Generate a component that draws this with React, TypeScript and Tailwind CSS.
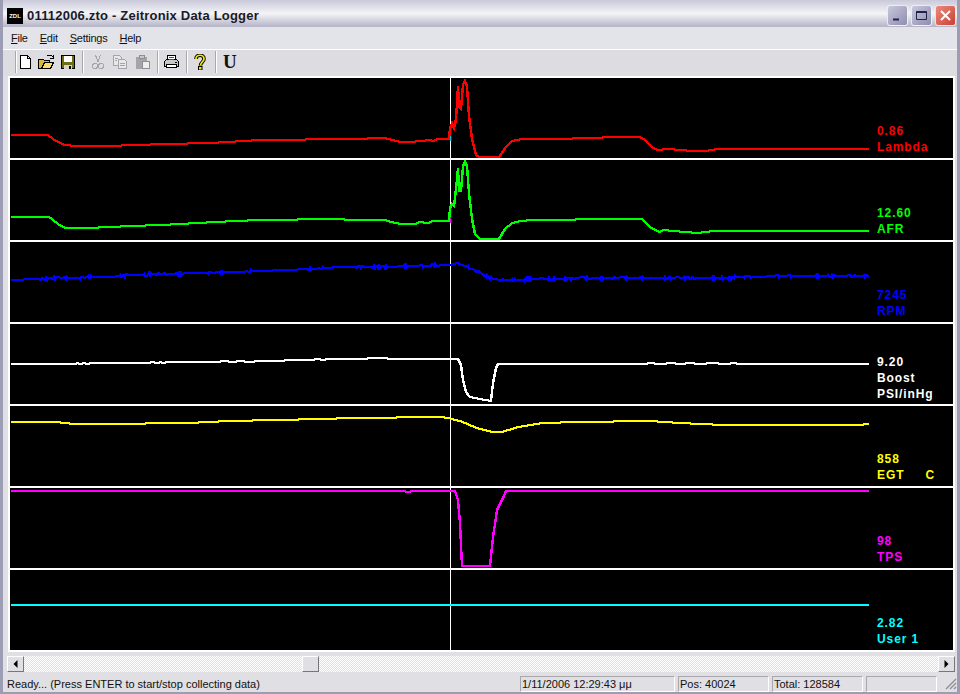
import type { ReactNode } from "react";

const UI_FONT = "font-['Liberation_Sans',Arial,sans-serif]";

type Pt = [number, number];

interface Channel {
  color: string;
  top: number;
  pts: Pt[];
  jitter?: number;
  labels: string[];
  pad: string;
  mark?: { color: string; y1: number; y2: number };
}

// small stable noise, so the trace looks sampled and not drawn
function noise(x: number) {
  const s = Math.sin(x * 12.9898) * 43758.5453;
  return s - Math.floor(s);
}

function trace(pts: Pt[], jitter = 0) {
  const out: string[] = [];
  for (let i = 0; i < pts.length - 1; i++) {
    const [x0, y0] = pts[i];
    const [x1, y1] = pts[i + 1];
    for (let x = Math.ceil(x0); x < x1; x++) {
      const y = y0 + ((y1 - y0) * (x - x0)) / (x1 - x0);
      const j = jitter && noise(Math.floor(x / 4)) > 1 - jitter ? (noise(x) > 0.5 ? 1 : -1) : 0;
      out.push(`${x},${Math.round(y) + j}`);
    }
  }
  const [lx, ly] = pts[pts.length - 1];
  out.push(`${lx},${Math.round(ly)}`);
  return out.join(" ");
}

const CHANNELS: Channel[] = [
  {
    color: "#ff0000",
    top: 78,
    labels: ["0.86", "Lambda"],
    pad: "pb-[3px]",
    mark: { color: "#00c8d8", y1: 126, y2: 141 },
    pts: [
      [11, 135], [48, 135], [52, 138], [56, 141], [65, 145], [77, 146], [107, 146], [135, 145], [165, 144],
      [210, 143], [260, 140], [350, 139], [385, 138], [393, 140], [400, 142], [410, 142], [430, 140],
      [434, 141], [437, 139], [449, 139], [450, 128], [452, 123], [454, 128], [456, 119], [458, 86],
      [459, 106], [461, 109], [463, 84], [465, 81], [467, 86], [469, 116], [472, 139], [476, 155],
      [480, 157], [499, 157], [505, 148], [512, 141], [522, 139], [557, 139], [617, 137], [640, 137],
      [645, 140], [652, 147], [658, 150], [667, 149], [683, 150], [690, 151], [705, 151], [717, 149], [869, 149],
    ],
  },
  {
    color: "#00ff00",
    top: 160,
    labels: ["12.60", "AFR"],
    pad: "pb-[3px]",
    mark: { color: "#ff00ff", y1: 208, y2: 223 },
    pts: [
      [11, 217], [49, 217], [52, 219], [58, 224], [65, 228], [87, 228], [110, 227], [130, 226], [160, 225],
      [180, 224], [215, 222], [258, 220], [290, 220], [305, 219], [385, 220], [395, 223], [402, 224],
      [415, 224], [420, 222], [428, 223], [432, 221], [449, 221], [450, 208], [452, 204], [454, 206],
      [456, 189], [458, 168], [459, 191], [461, 191], [463, 166], [465, 162], [467, 166], [469, 193],
      [472, 219], [475, 234], [480, 239], [499, 239], [505, 229], [512, 223], [520, 221], [533, 220],
      [617, 219], [642, 219], [650, 227], [660, 232], [663, 230], [697, 233], [713, 231], [869, 231],
    ],
  },
  {
    color: "#0000ff",
    top: 242,
    jitter: 0.35,
    labels: ["7245", "RPM"],
    pad: "pb-[3px]",
    pts: [
      [11, 280], [60, 278], [110, 277], [130, 275], [200, 273], [260, 271], [310, 269], [340, 267], [380, 267],
      [449, 265], [457, 263], [473, 269], [490, 278], [500, 280], [550, 279], [597, 278], [717, 278],
      [783, 276], [869, 276],
    ],
  },
  {
    color: "#ffffff",
    top: 324,
    labels: ["9.20", "Boost", "PSI/inHg"],
    pad: "pb-[2px]",
    pts: [
      [11, 364], [75, 364], [78, 363], [80, 364], [84, 363], [88, 364], [90, 363], [148, 363], [152, 362], [158, 363],
      [160, 362], [164, 363], [166, 362], [215, 362], [225, 361], [232, 362], [240, 361], [250, 362], [258, 361],
      [310, 360], [318, 359], [324, 360], [326, 359], [365, 359], [370, 358], [385, 358], [390, 359],
      [458, 359], [461, 365], [463, 380], [466, 392], [470, 397], [480, 399], [491, 401], [493, 383],
      [496, 368], [498, 364], [645, 364], [650, 363], [660, 364], [672, 363], [680, 364], [690, 363],
      [700, 364], [712, 363], [725, 364], [735, 363], [738, 364], [869, 364],
    ],
  },
  {
    color: "#ffff00",
    top: 406,
    labels: ["858", "EGT     C"],
    pad: "pb-[3px]",
    pts: [
      [11, 422], [60, 422], [62, 423], [78, 424], [145, 424], [146, 423], [188, 423], [228, 421], [276, 420],
      [320, 419], [352, 418], [440, 417], [449, 418], [452, 419], [460, 421], [477, 428], [492, 432],
      [502, 432], [518, 427], [543, 423], [577, 422], [650, 421], [680, 423], [723, 425], [857, 425], [869, 424],
    ],
  },
  {
    color: "#ff00ff",
    top: 488,
    labels: ["98", "TPS"],
    pad: "pb-[3px]",
    pts: [
      [11, 491], [404, 491], [408, 492], [412, 491], [455, 491], [458, 500], [460, 523], [462, 566], [490, 566],
      [493, 537], [497, 510], [502, 500], [506, 491], [869, 491],
    ],
  },
  {
    color: "#00ffff",
    top: 570,
    labels: ["2.82", "User 1"],
    pad: "pb-[3px]",
    pts: [[11, 605], [869, 605]],
  },
];

function ChartRow({ ch }: { ch: Channel }) {
  return (
    <div className="relative flex h-[82px] border-b-2 border-white">
      <svg width={860} height={80} viewBox={`10 ${ch.top} 860 80`} className="shrink-0">
        {ch.mark && (
          <line x1={450.5} x2={450.5} y1={ch.mark.y1} y2={ch.mark.y2} stroke={ch.mark.color} strokeWidth={1.5} />
        )}
        <polyline
          points={trace(ch.pts, ch.jitter)}
          fill="none"
          stroke={ch.color}
          strokeWidth={2.4}
          shapeRendering="crispEdges"
        />
      </svg>
      <div
        className={`flex flex-1 flex-col justify-end pl-[7px] text-[12px] leading-[16px] font-bold tracking-[0.9px] whitespace-pre ${UI_FONT} ${ch.pad}`}
        style={{ color: ch.color }}
      >
        {ch.labels.map((l) => (
          <div key={l}>{l}</div>
        ))}
      </div>
    </div>
  );
}

function ToolIcon({ children, className }: { children: ReactNode; className: string }) {
  return (
    <svg width={16} height={16} viewBox="0 0 16 16" className={`shrink-0 ${className}`} shapeRendering="crispEdges">
      {children}
    </svg>
  );
}

function Sep({ className }: { className: string }) {
  return <div className={`h-[22px] w-[2px] shrink-0 border-l border-r border-l-[#a8a7ab] border-r-white ${className}`} />;
}

function Toolbar() {
  return (
    <div className="flex h-[28px] items-center border-t border-t-white bg-[#dddce0] pb-[3px]">
      <Sep className="ml-[12px]" />
      <ToolIcon className="">
        <path d="M3.5 1.5h7l3 3v10h-10z" fill="#fff" stroke="#000" />
        <path d="M10.5 1.5v3h3" fill="none" stroke="#000" />
      </ToolIcon>
      <ToolIcon className="ml-[5px]">
        <path d="M0.5 5.5h5l1 1h5v8h-11z" fill="#d8b838" stroke="#000" />
        <path d="M3.5 14.5l3-6h9l-3 6z" fill="#f4e070" stroke="#000" />
        <path d="M9 2l2-1 2 0 2 2M15 1v3h-3" fill="none" stroke="#000" />
      </ToolIcon>
      <ToolIcon className="ml-[6px]">
        <path d="M1.5 1.5h13v13h-13z" fill="#6e6e14" stroke="#000" />
        <path d="M4 2h8v6H4z" fill="#fff" />
        <path d="M4 11h8v3.5H4z" fill="#d4d4c8" />
        <path d="M9 11.5h2v3H9z" fill="#000" />
      </ToolIcon>
      <Sep className="ml-[6px]" />
      <ToolIcon className="ml-[6px]">
        <path d="M5.5 1l2.5 7M10.5 1L8 8" fill="none" stroke="#a5a4a8" />
        <circle cx="5" cy="12" r="2.5" fill="none" stroke="#a5a4a8" />
        <circle cx="11" cy="12" r="2.5" fill="none" stroke="#a5a4a8" />
      </ToolIcon>
      <ToolIcon className="ml-[6px]">
        <path d="M1.5 1.5h6l2 2v8h-8z" fill="#e8e8ea" stroke="#a5a4a8" />
        <path d="M6.5 5.5h6l2 2v7h-8z" fill="#e8e8ea" stroke="#a5a4a8" />
        <path d="M8 9h5M8 11h5M3 4h3M3 6h2" stroke="#a5a4a8" />
      </ToolIcon>
      <ToolIcon className="ml-[7px]">
        <path d="M1 3h11v12H1z" fill="#a5a4a8" />
        <path d="M4 1.5h5v3H4z" fill="#c8c7cb" stroke="#8f8e92" />
        <path d="M7.5 7.5h7v7h-7z" fill="#eeeeef" stroke="#8f8e92" />
      </ToolIcon>
      <Sep className="ml-[6px]" />
      <ToolIcon className="ml-[4px]">
        <path d="M4.5 1.5h8v5h-8z" fill="#fff" stroke="#000" />
        <path d="M1.5 7.5l2-2h10l2 2v5h-14z" fill="#c8c8c8" stroke="#000" />
        <path d="M3.5 10.5h10v3h-10z" fill="#fff" stroke="#000" />
        <path d="M6 3h5M6 5h5" stroke="#555" />
        <path d="M12 8h2" stroke="#000" />
      </ToolIcon>
      <Sep className="ml-[7px]" />
      <svg width={12} height={16} viewBox="0 0 12 16" className="ml-[6px] shrink-0">
        <path d="M2 5c0-5 8-5 8 0 0 3-3.500 3-3.500 6.500" fill="none" stroke="#000" strokeWidth={3.6} />
        <path d="M2 5c0-5 8-5 8 0 0 3-3.500 3-3.500 6.500" fill="none" stroke="#f4e800" strokeWidth={1.7} />
        <rect x={4.5} y={12.5} width={3.5} height={3.5} fill="#f4e800" stroke="#000" />
      </svg>
      <Sep className="ml-[9px]" />
      <span className="ml-[6px] font-['Liberation_Serif',serif] text-[19px] leading-none font-bold text-[#111]">U</span>
    </div>
  );
}

function WinButton({ className, children }: { className: string; children: ReactNode }) {
  return (
    <div className={`flex size-[21px] items-center justify-center rounded-[3px] border border-white/80 ${className}`}>
      <svg width={15} height={15} viewBox="0 0 15 15">
        {children}
      </svg>
    </div>
  );
}

function StatusCell({ className, children }: { className: string; children?: ReactNode }) {
  return (
    <div className={`flex h-[16px] shrink-0 items-center border border-t-[#a8a7ab] border-l-[#a8a7ab] border-r-white border-b-white pl-[1px] ${className}`}>
      {children}
    </div>
  );
}

function ScrollButton({ dir }: { dir: "left" | "right" }) {
  return (
    <div className="flex h-[16px] w-[17px] shrink-0 items-center justify-center border border-t-white border-l-white border-r-[#77767a] border-b-[#77767a] bg-[#e0dfe3]">
      <svg width={5} height={8} viewBox="0 0 5 8">
        <path d={dir === "left" ? "M4.500 0v8L0.500 4z" : "M0.500 0v8l4-4z"} fill="#000" />
      </svg>
    </div>
  );
}

const underlineMenu = ["File", "Edit", "Settings", "Help"];

export default function App() {
  return (
    <div className={`flex h-[694px] w-[960px] flex-col overflow-hidden border-x-[3px] border-b-[2px] border-x-[#9c9cb4] border-b-[#9c9cb4] bg-[#e0dfe3] text-[#111] ${UI_FONT}`}>
      {/* title bar */}
      <div className="-mx-[3px] flex h-[27px] shrink-0 items-center bg-gradient-to-b from-[#c9c9d9] via-[#f4f4f8] to-[#b4b4c6] pt-[4px] pl-[7px]">
        <div className="flex size-[16px] shrink-0 items-center justify-center bg-black text-[6px] leading-none font-bold text-white">
          ZDL
        </div>
        <span className="ml-[4px] text-[13px] font-bold tracking-[0.2px] whitespace-nowrap text-[#1a1a28]">
          01112006.zto - Zeitronix Data Logger
        </span>
        <div className="ml-auto flex items-center gap-[3px] pr-[4px]">
          <WinButton className="bg-gradient-to-br from-[#c8c8dc] to-[#8e8eb0]">
            <path d="M3 10.500h6v2H3z" fill="#22224a" />
          </WinButton>
          <WinButton className="bg-gradient-to-br from-[#c8c8dc] to-[#8e8eb0]">
            <path d="M2.500 3.500h10v8h-10z" fill="none" stroke="#22224a" />
            <path d="M2.500 3h10v2h-10z" fill="#22224a" />
          </WinButton>
          <WinButton className="bg-gradient-to-br from-[#ea8a7c] to-[#c83c34]">
            <path d="M3 3l9 9M12 3l-9 9" stroke="#fff" strokeWidth={2} />
          </WinButton>
        </div>
      </div>

      {/* menu */}
      <div className="flex h-[22px] shrink-0 items-center bg-[#e3e3ea] pt-[1px] pl-[8px] text-[11px] tracking-[-0.25px]">
        {underlineMenu.map((m) => (
          <span key={m} className="mr-[12px]">
            <span className="underline">{m[0]}</span>
            {m.slice(1)}
          </span>
        ))}
      </div>

      <Toolbar />

      {/* chart area */}
      <div className="relative ml-[5px] mr-[2px] h-[576px] shrink-0 border-x-2 border-t-2 border-white bg-black">
        <div className="absolute top-0 bottom-[2px] left-[440px] w-px bg-white" />
        {CHANNELS.map((ch) => (
          <ChartRow key={ch.color} ch={ch} />
        ))}
      </div>

      {/* horizontal scroll */}
      <div className="mt-[4px] ml-[4px] mr-[2px] flex h-[16px] shrink-0 bg-[repeating-conic-gradient(#ffffff_0_25%,#e0dfe3_0_50%)] bg-[length:2px_2px]">
        <ScrollButton dir="left" />
        <div className="ml-[278px] h-[16px] w-[17px] border border-t-white border-l-white border-r-[#77767a] border-b-[#77767a] bg-[#e0dfe3]" />
        <div className="flex-1" />
        <ScrollButton dir="right" />
      </div>

      {/* status bar */}
      <div className="mt-[4px] flex h-[16px] shrink-0 items-center pl-[4px] text-[11px] whitespace-nowrap">
        <span className="w-[513px] shrink-0">Ready... (Press ENTER to start/stop collecting data)</span>
        <StatusCell className="w-[155px]">1/11/2006 12:29:43 μμ</StatusCell>
        <StatusCell className="ml-[3px] w-[91px]">Pos: 40024</StatusCell>
        <StatusCell className="ml-[3px] w-[91px]">Total: 128584</StatusCell>
        <StatusCell className="ml-[3px] w-[71px]" />
        <svg width={12} height={12} viewBox="0 0 12 12" className="ml-[8px] shrink-0">
          <path d="M11 1L1 11M11 5l-6 6M11 9l-2 2" stroke="#8f8e92" strokeWidth={1.3} />
        </svg>
      </div>
    </div>
  );
}
